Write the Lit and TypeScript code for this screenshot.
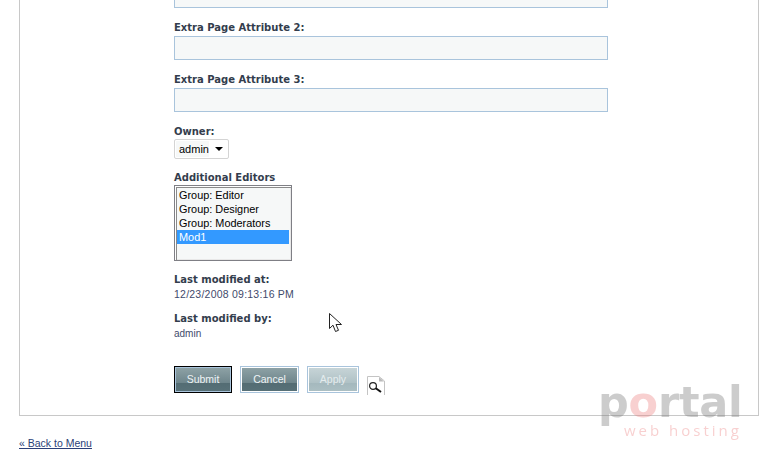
import { LitElement, html, css } from 'lit';
import { customElement } from 'lit/decorators.js';

@customElement('app-root')
export class AppRoot extends LitElement {
  static styles = css`
    :host {
      display: block;
      position: relative;
      width: 776px;
      height: 450px;
      overflow: hidden;
      background: #fff;
      font-family: 'Liberation Sans', sans-serif;
      font-size: 10.5px;
      color: #333d4d;
    }
    .panel {
      box-sizing: border-box;
      width: 740px;
      height: 416px;
      margin-left: 19px;
      padding-left: 154px;
      border: 1px solid #c8c8c8;
      border-top: none;
    }
    .stub {
      box-sizing: border-box;
      width: 434px;
      height: 8px;
      margin-bottom: 12px;
      border: 1px solid #a9c4dc;
      border-top: none;
      background: #f6f8f8;
    }
    .label {
      height: 14px;
      line-height: 16px;
      font-family: 'DejaVu Sans', sans-serif;
      font-weight: bold;
      font-size: 10px;
    }
    .text-input {
      display: block;
      box-sizing: border-box;
      width: 434px;
      height: 24px;
      margin: 2px 0 12px;
      padding: 0 4px;
      border: 1px solid #a9c4dc;
      background: #f6f8f8;
    }
    .select {
      display: flex;
      align-items: center;
      box-sizing: border-box;
      width: 55px;
      height: 20px;
      margin: 1px 0 11px;
      padding: 1px 5px 1px 1px;
      border: 1px solid #d4d4d4;
      border-radius: 2px;
      color: #000;
      font-size: 11px;
    }
    .select span {
      align-self: stretch;
      width: 30px;
      padding-left: 3px;
      line-height: 16px;
      background: #f6f8f8;
    }
    .arrow {
      width: 0;
      height: 0;
      margin-left: auto;
      border: 4px solid transparent;
      border-top: 4px solid #000;
      border-bottom: none;
    }
    .listbox {
      box-sizing: border-box;
      width: 118px;
      height: 76px;
      margin: 1px 0 11px;
      padding: 2px;
      border: 1px solid #7f7f85;
      background: #f6f8f8;
      box-shadow: inset 1px 1px 0 0 #fff, inset 2px 2px 0 0 #8a8a8a, inset -1px -1px 0 0 #e8e8e8;
      color: #000;
      font-size: 10.9px;
    }
    .option {
      height: 14px;
      line-height: 14px;
      padding-left: 2px;
    }
    .option.selected {
      background: #3399ff;
      color: #fff;
    }
    .value {
      height: 14px;
      line-height: 14px;
      margin: 1px 0 10px;
      color: #3f4a6b;
    }
    .value.date { letter-spacing: 0.23px; }
    .value.last { margin-bottom: 26px; font-size: 10px; line-height: 16px; }
    .buttons {
      display: flex;
      align-items: flex-start;
      gap: 8px;
    }
    button {
      box-sizing: border-box;
      height: 27px;
      padding: 0 0 2px;
      border: 1px solid #a9c4dc;
      box-shadow: inset 0 0 0 1px #fff;
      color: #eef4f6;
      font-family: 'Liberation Sans', sans-serif;
      font-size: 10.5px;
      background: linear-gradient(#8fa3a7 0, #6f868c 62%, #536c73 63%, #587178 100%);
    }
    button.submit {
      width: 58px;
      border-color: #000;
      box-shadow: inset 0 0 0 1px #a9c4dc;
    }
    button.cancel { width: 59px; }
    button.apply {
      width: 52px;
      color: #e4ecee;
      background: linear-gradient(#c8d5d8 0, #b0c2c6 62%, #a4b8bd 63%, #adc0c4 100%);
    }
    .preview { margin-top: 10px; display: block; }
    .back {
      display: inline-block;
      margin: 21px 0 0 19px;
      color: #2b3f78;
      font-size: 10.5px;
      line-height: 13px;
      text-decoration: underline;
    }
    .cursor { position: absolute; left: 329px; top: 313px; }
    .logo {
      position: absolute;
      left: 598px;
      top: 382px;
      width: 150px;
      filter: blur(0.6px);
      pointer-events: none;
    }
    .logo-main {
      font-family: 'DejaVu Sans', sans-serif;
      font-size: 43px;
      line-height: 40px;
      font-weight: 700;
      letter-spacing: -0.2px;
      color: rgba(120, 120, 120, 0.38);
    }
    .logo-main b { font-weight: 700; color: rgba(235, 120, 120, 0.35); }
    .logo-sub {
      margin: -1px 0 0 26px;
      font-family: 'Open Sans', sans-serif;
      font-size: 15px;
      line-height: 18px;
      letter-spacing: 3px;
      white-space: nowrap;
      color: rgba(235, 120, 120, 0.35);
    }
  `;

  render() {
    return html`
      <div class="panel">
        <div class="stub"></div>
        <div class="label">Extra Page Attribute 2:</div>
        <input class="text-input" />
        <div class="label">Extra Page Attribute 3:</div>
        <input class="text-input" />
        <div class="label">Owner:</div>
        <div class="select"><span>admin</span><i class="arrow"></i></div>
        <div class="label">Additional Editors</div>
        <div class="listbox">
          <div class="option">Group: Editor</div>
          <div class="option">Group: Designer</div>
          <div class="option">Group: Moderators</div>
          <div class="option selected">Mod1</div>
        </div>
        <div class="label">Last modified at:</div>
        <div class="value date">12/23/2008 09:13:16 PM</div>
        <div class="label">Last modified by:</div>
        <div class="value last">admin</div>
        <div class="buttons">
          <button class="submit">Submit</button>
          <button class="cancel">Cancel</button>
          <button class="apply">Apply</button>
          <svg class="preview" width="18" height="19" viewBox="0 0 18 19">
            <path d="M0.5 19V0.5H12L17.5 5V19" fill="#fff" stroke="#c4c4c4" />
            <path d="M12 1v4.5h5z" fill="#bbb" />
            <circle cx="6" cy="10" r="3.4" fill="none" stroke="#222" stroke-width="1.2" />
            <path d="M8.8 12.2l5.2 3.8" stroke="#111" stroke-width="2" />
          </svg>
        </div>
      </div>
      <a class="back">« Back to Menu</a>
      <svg class="cursor" width="14" height="20" viewBox="0 0 14 20">
        <path d="M0.5 0.5V15.5L4 12.2L6.5 18.5L9.5 17.3L7 11.5H12.5Z" fill="#fff" stroke="#222" />
      </svg>
      <div class="logo">
        <div class="logo-main">p<b>o</b>rtal</div>
        <div class="logo-sub">web hosting</div>
      </div>
    `;
  }
}
